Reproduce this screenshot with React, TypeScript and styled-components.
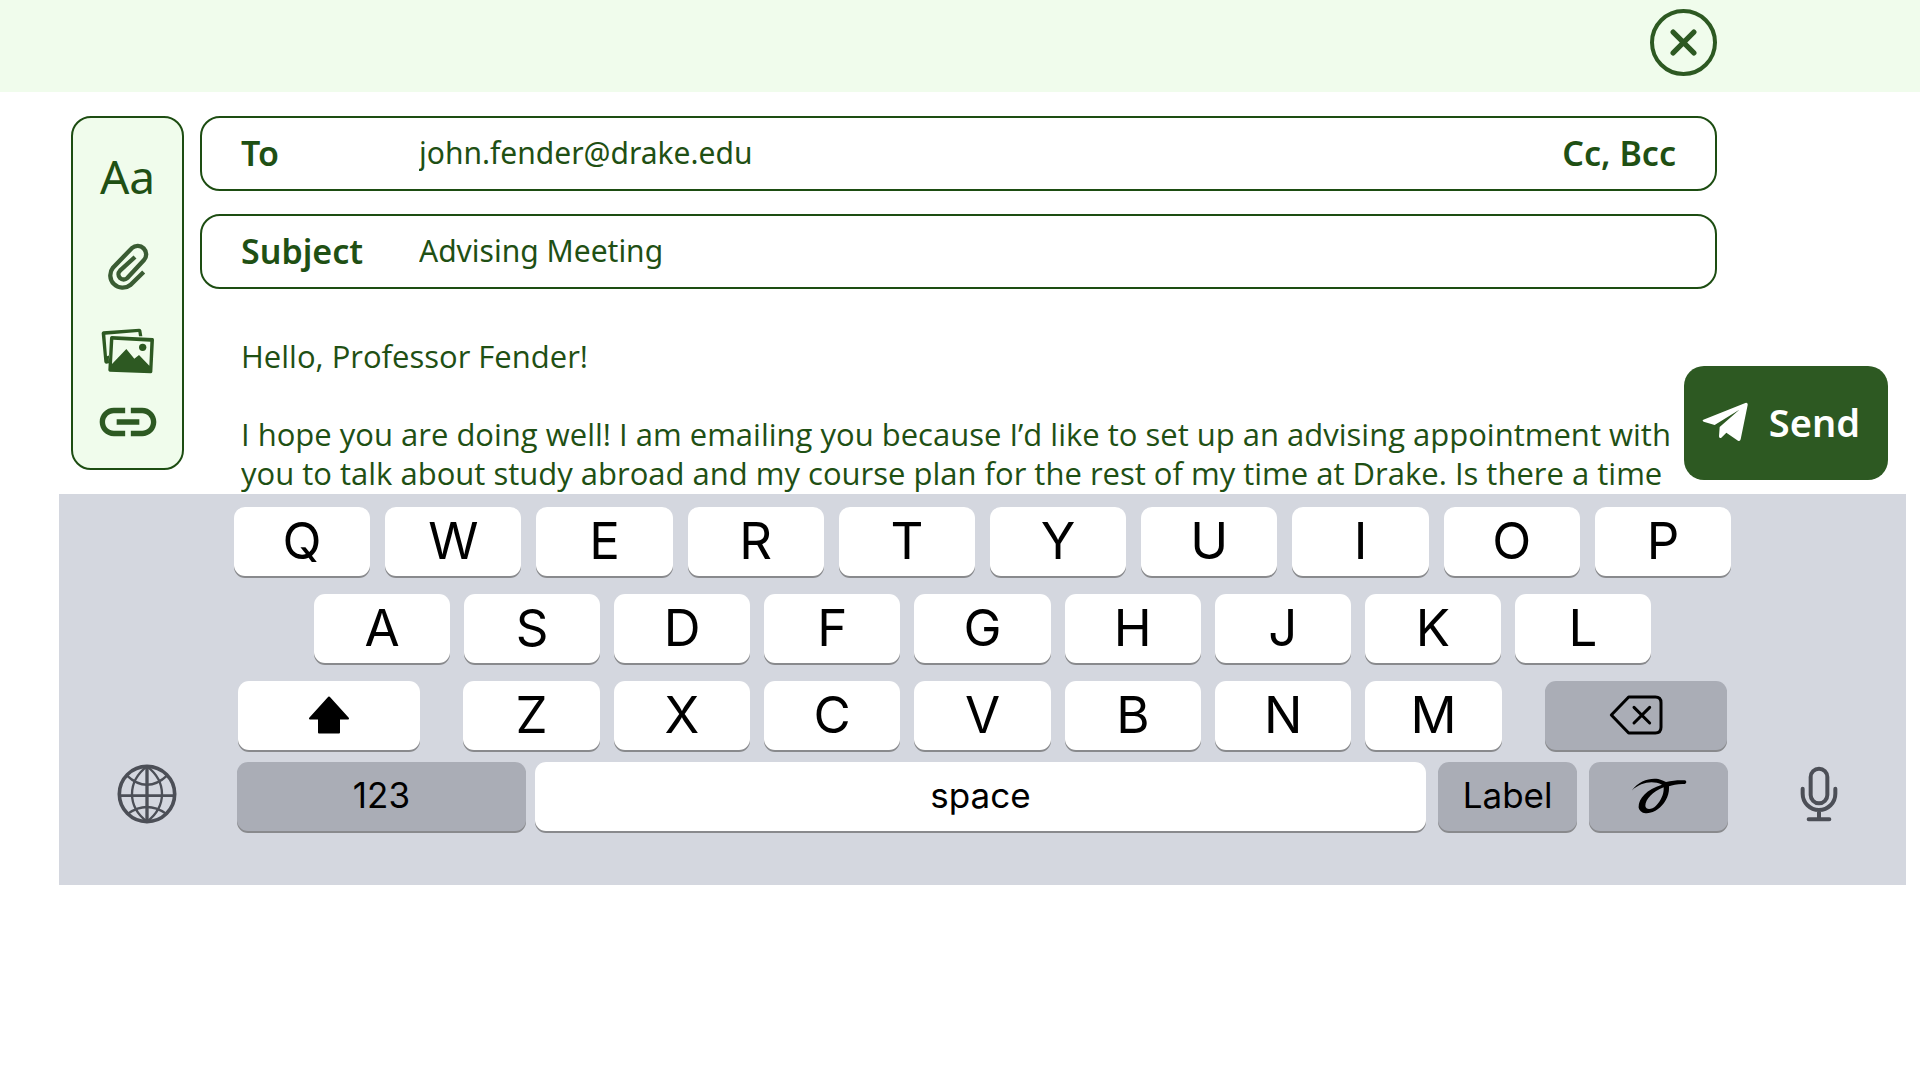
import React, { useState } from "react";
import styled, { createGlobalStyle } from "styled-components";

const color = {
  ink: "#1f5014",
  line: "#1d4d12",
  solid: "#2d5922",
  clip: "#3a5c33",
  mint: "#f0fcec",
  tray: "#d4d7df",
  keyGrey: "#aaadb6",
  keyIcon: "#4c4f57",
};

const GlobalStyle = createGlobalStyle`
  *, *::before, *::after { box-sizing: border-box; }
  body { margin: 0; background: #fff; font-family: "Noto Sans", "Open Sans", sans-serif; color: ${color.ink}; }
  button, input, textarea { font: inherit; color: inherit; background: none; border: 0; padding: 0; margin: 0; outline: none; }
  button { cursor: pointer; }
  svg { display: block; }
`;

const Header = styled.header`
  display: flex;
  justify-content: flex-end;
  align-items: flex-start;
  height: 92px;
  padding: 9px 203px 0 0;
  background: ${color.mint};
`;

const CloseButton = styled.button`
  display: grid;
  place-items: center;
  width: 67px;
  height: 67px;
  border: 4px solid ${color.solid};
  border-radius: 50%;
`;

const Compose = styled.form`
  display: flex;
  align-items: flex-start;
  gap: 16px;
  padding: 24px 0 0 71px;
`;

const Toolbar = styled.div`
  display: flex;
  flex-direction: column;
  align-items: center;
  flex: none;
  width: 113px;
  height: 354px;
  padding-top: 26px;
  border: 2px solid ${color.line};
  border-radius: 20px;
  background: ${color.mint};
`;

const Tool = styled.button<{ $height: number }>`
  display: grid;
  place-items: center;
  width: 100%;
  height: ${(p) => p.$height}px;
  font-size: 46px;
  line-height: 64px;
`;

const Message = styled.div`
  flex: 1;
  min-width: 0;
`;

const Field = styled.div`
  display: flex;
  align-items: center;
  height: 75px;
  margin: 0 203px 23px 0;
  padding: 0 39px 2px 39px;
  border: 2px solid ${color.line};
  border-radius: 20px;
`;

const FieldLabel = styled.label`
  flex: none;
  width: 178px;
  font-size: 34px;
  font-weight: 600;
`;

const FieldInput = styled.input`
  flex: 1;
  min-width: 0;
  font-size: 30px;
`;

const CopyButton = styled.button`
  flex: none;
  font-size: 34px;
  font-weight: 600;
`;

const BodyRow = styled.div`
  display: flex;
  align-items: flex-end;
  height: 182px;
  padding: 0 32px 0 41px;
`;

const Body = styled.textarea`
  flex: 1;
  min-width: 0;
  height: 157px;
  resize: none;
  overflow: hidden;
  white-space: pre;
  font-family: "Open Sans", "Noto Sans", sans-serif;
  font-size: 31px;
  line-height: 39px;
`;

const SendButton = styled.button`
  display: flex;
  align-items: center;
  justify-content: space-between;
  flex: none;
  width: 204px;
  height: 114px;
  margin-bottom: 14px;
  padding: 0 28px 2px 18px;
  border-radius: 20px;
  background: ${color.solid};
  color: #fff;
  font-size: 38px;
  font-weight: 600;
`;

const Tray = styled.section`
  display: flex;
  height: 391px;
  margin: 0 14px 0 59px;
  padding-top: 13px;
  background: ${color.tray};
`;

const TraySide = styled.div`
  display: flex;
  flex-direction: column;
  align-items: center;
  flex: none;
  width: 175px;
  padding-top: 256px;
`;

const SideButton = styled.button`
  display: grid;
  place-items: center;
  width: 62px;
  height: 62px;
`;

const Keys = styled.div`
  flex: 1;
  min-width: 0;
`;

const KeyRow = styled.div<{ $inset?: number; $gap: number; $last?: boolean }>`
  display: flex;
  gap: ${(p) => p.$gap}px;
  margin-bottom: 18px;
  margin-top: ${(p) => (p.$last ? -6 : 0)}px;
  padding: 0 ${(p) => p.$inset ?? 0}px;
`;

const KeyGroup = styled.div<{ $grow: number; $gap: number }>`
  display: flex;
  flex: ${(p) => p.$grow} 1 0;
  gap: ${(p) => p.$gap}px;
`;

const Key = styled.button<{ $grow?: number; $grey?: boolean; $word?: boolean }>`
  display: grid;
  place-items: center;
  flex: ${(p) => p.$grow ?? 1} 1 0;
  min-width: 0;
  height: 69px;
  padding-bottom: 2px;
  border-radius: 11px;
  background: ${(p) => (p.$grey ? color.keyGrey : "#fff")};
  box-shadow: 0 2px 0 #898a8d;
  color: #000;
  font-family: Inter, Roboto, sans-serif;
  font-size: ${(p) => (p.$word ? 35 : 51)}px;
  line-height: 67px;
`;

const CloseIcon = () => (
  <svg width="27" height="27" viewBox="0 0 26 26" fill="none" stroke={color.solid} strokeWidth="5" strokeLinecap="round">
    <path d="M3 3 23 23M23 3 3 23" />
  </svg>
);

const ClipIcon = () => (
  <svg width="44" height="50" viewBox="198 457 132 150" fill="none" stroke={color.clip} strokeWidth="13">
    <path d="M285 502 240 543A15.5 15.5 0 0 0 262 565L312 511A25.5 25.5 0 0 0 276 475L219 534A37 37 0 0 0 271 586L311 547" />
  </svg>
);

const PhotosIcon = () => (
  <svg width="54" height="46" viewBox="185 711 162 138" fill={color.solid}>
    <path
      fillRule="evenodd"
      d="M192 721 300 713Q305 713 306 718L309 736 299 736 297 723 198 731 203 796 210 793 208 817 201 818Q196 818 195 813L187 727Q187 722 192 721Z
         M217 735 340 741Q344 742 344 746L339 843Q338 847 334 847L211 842Q207 841 207 837L212 740Q213 735 217 735ZM222 746 218 819 261 774 285 803 299 792 330 824 333 752Z"
    />
    <circle cx="310" cy="769" r="11" />
  </svg>
);

const LinkIcon = () => (
  <svg width="68" height="68" viewBox="0 0 24 24" fill={color.solid}>
    <path d="M3.9 12c0-1.71 1.39-3.1 3.1-3.1h4V7H7c-2.76 0-5 2.24-5 5s2.24 5 5 5h4v-1.900H7c-1.710 0-3.100-1.390-3.100-3.100zM8 13h8v-2H8v2zm9-6h-4v1.900h4c1.710 0 3.100 1.390 3.100 3.100s-1.390 3.100-3.100 3.100h-4V17h4c2.760 0 5-2.240 5-5s-2.240-5-5-5z" />
  </svg>
);

const PlaneIcon = () => (
  <svg width="46" height="40" viewBox="544 1212 138 120" fill="#fff">
    <path d="M548 1265 674 1215Q682 1213 681 1221L660 1324Q658 1331 652 1328L617 1304 602 1319Q595 1322 595 1315L597 1287 656 1235 582 1281 549 1271Q543 1268 548 1265Z" />
  </svg>
);

const ShiftIcon = () => (
  <svg width="42" height="38" viewBox="0 0 42 38">
    <path
      d="M21 1.500 40 22.500H31V36.500H11V22.500H2Z"
      stroke="#000"
      strokeWidth="2"
      strokeLinejoin="round"
    />
  </svg>
);

const DeleteIcon = () => (
  <svg width="54" height="40" viewBox="119 46 162 120" fill="none" stroke="#000" strokeWidth="9" strokeLinejoin="round" strokeLinecap="round">
    <path d="M126 106 178 52H258Q275 52 275 69V143Q275 160 258 160H178Z" />
    <path d="M194 83 241 130M241 83 194 130" />
  </svg>
);

const ScribbleIcon = () => (
  <svg width="56" height="36" viewBox="175 291 168 108">
    <path
      fillRule="evenodd"
      d="M177 329C195 303 222 293 245 293C262 293 272 299 280 303C300 298 320 297 336 298Q341 299 341 303Q341 308 336 309C318 308 300 311 289 316C291 345 275 370 255 385C240 398 205 405 198 380C196 355 220 325 268 311C240 298 205 303 177 329Z
         M273 319C240 332 218 355 218 375C220 388 238 386 250 374C266 357 274 338 273 319Z"
    />
  </svg>
);

const GlobeIcon = () => (
  <svg width="60" height="60" viewBox="85 72 180 180" fill="none" stroke={color.keyIcon} strokeWidth="7">
    <circle cx="175" cy="162" r="83" strokeWidth="11" />
    <path d="M175 79V245" strokeWidth="10" />
    <path d="M92 167H258" strokeWidth="8" />
    <path d="M175 79C115 125 115 199 175 245C235 199 235 125 175 79" />
    <path d="M114 106Q175 163 236 106M118 221Q175 181 232 221" />
  </svg>
);

const MicIcon = () => (
  <svg width="38" height="56" viewBox="686 258 114 168" fill="none" stroke={color.keyIcon} strokeWidth="12" strokeLinecap="round">
    <rect x="718" y="266" width="50" height="104" rx="25" />
    <path d="M694 326V341A49 49 0 0 0 792 341V326M743 390V417M712 418H774" />
  </svg>
);

const LetterKeys = ({ letters }: { letters: string }) => (
  <>
    {letters.split("").map((letter) => (
      <Key type="button" key={letter}>
        {letter}
      </Key>
    ))}
  </>
);

const draft = [
  "Hello, Professor Fender!",
  "",
  "I hope you are doing well! I am emailing you because I’d like to set up an advising appointment with",
  "you to talk about study abroad and my course plan for the rest of my time at Drake. Is there a time",
].join("\n");

export default function App() {
  const [to, setTo] = useState("john.fender@drake.edu");
  const [subject, setSubject] = useState("Advising Meeting");
  const [body, setBody] = useState(draft);

  return (
    <>
      <GlobalStyle />
      <Header>
        <CloseButton type="button" aria-label="Close">
          <CloseIcon />
        </CloseButton>
      </Header>
      <main>
        <Compose onSubmit={(e) => e.preventDefault()}>
          <Toolbar role="toolbar" aria-label="Formatting">
            <Tool type="button" $height={64}>Aa</Tool>
            <Tool type="button" $height={118} aria-label="Attach file"><ClipIcon /></Tool>
            <Tool type="button" $height={50} aria-label="Insert photo"><PhotosIcon /></Tool>
            <Tool type="button" $height={92} aria-label="Insert link"><LinkIcon /></Tool>
          </Toolbar>
          <Message>
            <Field>
              <FieldLabel htmlFor="to">To</FieldLabel>
              <FieldInput id="to" value={to} onChange={(e) => setTo(e.target.value)} />
              <CopyButton type="button">Cc, Bcc</CopyButton>
            </Field>
            <Field>
              <FieldLabel htmlFor="subject">Subject</FieldLabel>
              <FieldInput id="subject" value={subject} onChange={(e) => setSubject(e.target.value)} />
            </Field>
            <BodyRow>
              <Body aria-label="Message" spellCheck={false} value={body} onChange={(e) => setBody(e.target.value)} />
              <SendButton type="submit">
                <PlaneIcon />
                Send
              </SendButton>
            </BodyRow>
          </Message>
        </Compose>
        <Tray aria-label="Keyboard">
          <TraySide>
            <SideButton type="button" aria-label="Switch language"><GlobeIcon /></SideButton>
          </TraySide>
          <Keys>
            <KeyRow $gap={15}>
              <LetterKeys letters="QWERTYUIOP" />
            </KeyRow>
            <KeyRow $gap={14} $inset={80}>
              <LetterKeys letters="ASDFGHJKL" />
            </KeyRow>
            <KeyRow $gap={43} $inset={4}>
              <Key type="button" $grow={182} aria-label="Shift"><ShiftIcon /></Key>
              <KeyGroup $grow={1037} $gap={14}>
                <LetterKeys letters="ZXCVBNM" />
              </KeyGroup>
              <Key type="button" $grow={182} $grey aria-label="Delete"><DeleteIcon /></Key>
            </KeyRow>
            <KeyRow $gap={12} $inset={3} $last>
              <KeyGroup $grow={1190} $gap={9}>
                <Key type="button" $grow={289} $grey $word>123</Key>
                <Key type="button" $grow={892} $word>space</Key>
              </KeyGroup>
              <Key type="button" $grow={139} $grey $word>Label</Key>
              <Key type="button" $grow={139} $grey aria-label="Handwriting"><ScribbleIcon /></Key>
            </KeyRow>
          </Keys>
          <TraySide>
            <SideButton type="button" aria-label="Dictate"><MicIcon /></SideButton>
          </TraySide>
        </Tray>
      </main>
    </>
  );
}
